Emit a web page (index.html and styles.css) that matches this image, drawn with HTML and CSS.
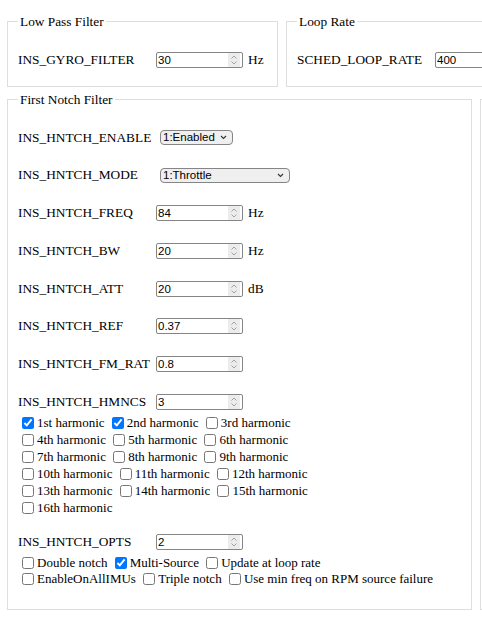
FILE: index.html
```html
<!DOCTYPE html>
<html lang="en">
<head>
    <meta charset="UTF-8">
    <meta name="viewport" content="width=device-width, initial-scale=1.0">
    <title>Filter Setup</title>
    <link rel="stylesheet" href="styles.css">
</head>
<body>
    <div class="set-row">
        <fieldset class="set small">
            <legend>Low Pass Filter</legend>
            <div class="param">
                <div class="param-row">
                    <label for="gyroFilter">INS_GYRO_FILTER</label>
                    <span class="num"><input type="number" id="gyroFilter" value="30"><span class="spin"><svg width="8" height="12" viewBox="0 0 8 12"><path d="M1.5 4.5 L4 2 L6.5 4.5 M1.5 7.5 L4 10 L6.5 7.5"/></svg></span></span>
                    <span class="unit">Hz</span>
                </div>
            </div>
        </fieldset>
        <fieldset class="set small">
            <legend>Loop Rate</legend>
            <div class="param">
                <div class="param-row">
                    <label for="loopRate">SCHED_LOOP_RATE</label>
                    <span class="num"><input type="number" id="loopRate" value="400"><span class="spin"><svg width="8" height="12" viewBox="0 0 8 12"><path d="M1.5 4.5 L4 2 L6.5 4.5 M1.5 7.5 L4 10 L6.5 7.5"/></svg></span></span>
                    <span class="unit">Hz</span>
                </div>
            </div>
        </fieldset>
    </div>

    <div class="set-row">
        <!-- First harmonic notch -->
        <fieldset class="set notch">
            <legend>First Notch Filter</legend>
            <div class="param">
                <div class="param-row">
                    <label for="hntchEnable">INS_HNTCH_ENABLE</label>
                    <span class="pick sel-short">
                        <select id="hntchEnable">
                            <option value="0">0:Disabled</option>
                            <option value="1" selected>1:Enabled</option>
                        </select>
                        <svg width="7" height="5" viewBox="0 0 7 5"><path d="M1 1 L3.5 3.5 L6 1"/></svg>
                    </span>
                </div>
            </div>
            <div class="param">
                <div class="param-row">
                    <label for="hntchMode">INS_HNTCH_MODE</label>
                    <span class="pick sel-long">
                        <select id="hntchMode">
                            <option value="0">0:Fixed</option>
                            <option value="1" selected>1:Throttle</option>
                            <option value="2">2:RPM Sensor</option>
                            <option value="3">3:ESC Telemetry</option>
                            <option value="4">4:Dynamic FFT</option>
                        </select>
                        <svg width="7" height="5" viewBox="0 0 7 5"><path d="M1 1 L3.5 3.5 L6 1"/></svg>
                    </span>
                </div>
            </div>
            <div class="param">
                <div class="param-row">
                    <label for="hntchFreq">INS_HNTCH_FREQ</label>
                    <span class="num"><input type="number" id="hntchFreq" value="84"><span class="spin"><svg width="8" height="12" viewBox="0 0 8 12"><path d="M1.5 4.5 L4 2 L6.5 4.5 M1.5 7.5 L4 10 L6.5 7.5"/></svg></span></span>
                    <span class="unit">Hz</span>
                </div>
            </div>
            <div class="param">
                <div class="param-row">
                    <label for="hntchBw">INS_HNTCH_BW</label>
                    <span class="num"><input type="number" id="hntchBw" value="20"><span class="spin"><svg width="8" height="12" viewBox="0 0 8 12"><path d="M1.5 4.5 L4 2 L6.5 4.5 M1.5 7.5 L4 10 L6.5 7.5"/></svg></span></span>
                    <span class="unit">Hz</span>
                </div>
            </div>
            <div class="param">
                <div class="param-row">
                    <label for="hntchAtt">INS_HNTCH_ATT</label>
                    <span class="num"><input type="number" id="hntchAtt" value="20"><span class="spin"><svg width="8" height="12" viewBox="0 0 8 12"><path d="M1.5 4.5 L4 2 L6.5 4.5 M1.5 7.5 L4 10 L6.5 7.5"/></svg></span></span>
                    <span class="unit">dB</span>
                </div>
            </div>
            <div class="param">
                <div class="param-row">
                    <label for="hntchRef">INS_HNTCH_REF</label>
                    <span class="num"><input type="number" id="hntchRef" value="0.37" step="0.01"><span class="spin"><svg width="8" height="12" viewBox="0 0 8 12"><path d="M1.5 4.5 L4 2 L6.5 4.5 M1.5 7.5 L4 10 L6.5 7.5"/></svg></span></span>
                </div>
            </div>
            <div class="param">
                <div class="param-row">
                    <label for="hntchFmRat">INS_HNTCH_FM_RAT</label>
                    <span class="num"><input type="number" id="hntchFmRat" value="0.8" step="0.1"><span class="spin"><svg width="8" height="12" viewBox="0 0 8 12"><path d="M1.5 4.5 L4 2 L6.5 4.5 M1.5 7.5 L4 10 L6.5 7.5"/></svg></span></span>
                </div>
            </div>
            <div class="param">
                <div class="param-row">
                    <label for="hntchHmncs">INS_HNTCH_HMNCS</label>
                    <span class="num"><input type="number" id="hntchHmncs" value="3"><span class="spin"><svg width="8" height="12" viewBox="0 0 8 12"><path d="M1.5 4.5 L4 2 L6.5 4.5 M1.5 7.5 L4 10 L6.5 7.5"/></svg></span></span>
                </div>
                <div class="checks">
                    <div><input type="checkbox" checked>1st harmonic <input type="checkbox" checked>2nd harmonic <input type="checkbox">3rd harmonic</div>
                    <div><input type="checkbox">4th harmonic <input type="checkbox">5th harmonic <input type="checkbox">6th harmonic</div>
                    <div><input type="checkbox">7th harmonic <input type="checkbox">8th harmonic <input type="checkbox">9th harmonic</div>
                    <div><input type="checkbox">10th harmonic <input type="checkbox">11th harmonic <input type="checkbox">12th harmonic</div>
                    <div><input type="checkbox">13th harmonic <input type="checkbox">14th harmonic <input type="checkbox">15th harmonic</div>
                    <div><input type="checkbox">16th harmonic</div>
                </div>
            </div>
            <div class="param after-checks">
                <div class="param-row">
                    <label for="hntchOpts">INS_HNTCH_OPTS</label>
                    <span class="num"><input type="number" id="hntchOpts" value="2"><span class="spin"><svg width="8" height="12" viewBox="0 0 8 12"><path d="M1.5 4.5 L4 2 L6.5 4.5 M1.5 7.5 L4 10 L6.5 7.5"/></svg></span></span>
                </div>
                <div class="checks opts">
                    <div><input type="checkbox">Double notch <input type="checkbox" checked>Multi-Source <input type="checkbox">Update at loop rate</div>
                    <div><input type="checkbox">EnableOnAllIMUs <input type="checkbox">Triple notch <input type="checkbox">Use min freq on RPM source failure</div>
                </div>
            </div>
        </fieldset>

        <!-- Second harmonic notch -->
        <fieldset class="set notch">
            <legend>Second Notch Filter</legend>
        </fieldset>
    </div>
</body>
</html>
```

FILE: styles.css
```css
body {
    margin: 0;
    padding: 14px 0 0 7px;
    font-family: "Liberation Serif", "Times New Roman", serif;
    font-size: 13px;
    color: #000;
    background-color: #fff;
    overflow: hidden;
}

.set-row {
    display: flex;
    align-items: stretch;
    gap: 8px;
    margin-bottom: 5px;
}

.set {
    flex: none;
    box-sizing: border-box;
    min-width: 0;
    margin: 0;
    padding: 1px 10px 18px;
    border: 1px solid #dedede;
}

.set legend {
    padding: 0 2px;
    font-size: 13.33px;
    line-height: 15px;
}

.small {
    width: 271px;
}

.notch {
    width: 465px;
    padding-bottom: 21px;
}

.param {
    margin-top: 21.75px;
}

.param.after-checks {
    margin-top: 18px;
}

.param-row {
    display: flex;
    align-items: center;
    height: 16px;
    white-space: nowrap;
}

.param-row label {
    flex: none;
    width: 138px;
    font-size: 13.33px;
}

/* number box with its own spinner */
.num {
    display: inline-flex;
    align-items: center;
    box-sizing: border-box;
    width: 87px;
    height: 16px;
    padding-right: 2px;
    border: 1px solid #858585;
    border-radius: 2px;
    background-color: #fff;
}

.num input {
    flex: 1;
    min-width: 0;
    height: 14px;
    margin: 0;
    padding: 0 0 0 1px;
    border: none;
    outline: none;
    background: transparent;
    font-family: "Liberation Sans", Arial, sans-serif;
    font-size: 11.5px;
    color: #000;
    -moz-appearance: textfield;
}

.num input::-webkit-inner-spin-button,
.num input::-webkit-outer-spin-button {
    -webkit-appearance: none;
    margin: 0;
}

.spin {
    display: flex;
    align-items: center;
    justify-content: center;
    width: 12px;
    height: 14px;
    background-color: #ececec;
}

.spin svg {
    fill: none;
    stroke: #a3a3a3;
    stroke-width: 1;
}

/* dropdown box */
.pick {
    display: inline-flex;
    align-items: center;
    box-sizing: border-box;
    height: 15px;
    margin-left: 4px;
    padding-right: 5px;
    border: 1px solid #858585;
    border-radius: 4px;
    background-color: #efefef;
}

.pick select {
    flex: 1;
    min-width: 0;
    height: 13px;
    margin: 0;
    padding: 0 0 0 2px;
    border: none;
    outline: none;
    background: transparent;
    -webkit-appearance: none;
    appearance: none;
    font-family: "Liberation Sans", Arial, sans-serif;
    font-size: 11.5px;
    line-height: 13px;
    color: #000;
}

.pick svg {
    flex: none;
    fill: none;
    stroke: #333;
    stroke-width: 1.1;
}

.sel-short {
    width: 73px;
}

.sel-long {
    width: 130px;
}

.unit {
    margin-left: 5px;
    font-size: 13.33px;
}

.checks {
    margin-top: 4px;
}

.checks.opts {
    margin-top: 5px;
}

.checks div {
    line-height: 17px;
    white-space: nowrap;
}

.checks.opts div {
    line-height: 16.5px;
}

.checks input {
    width: 12px;
    height: 12px;
    margin: 0 3px 0 4px;
    vertical-align: -2px;
}
```
